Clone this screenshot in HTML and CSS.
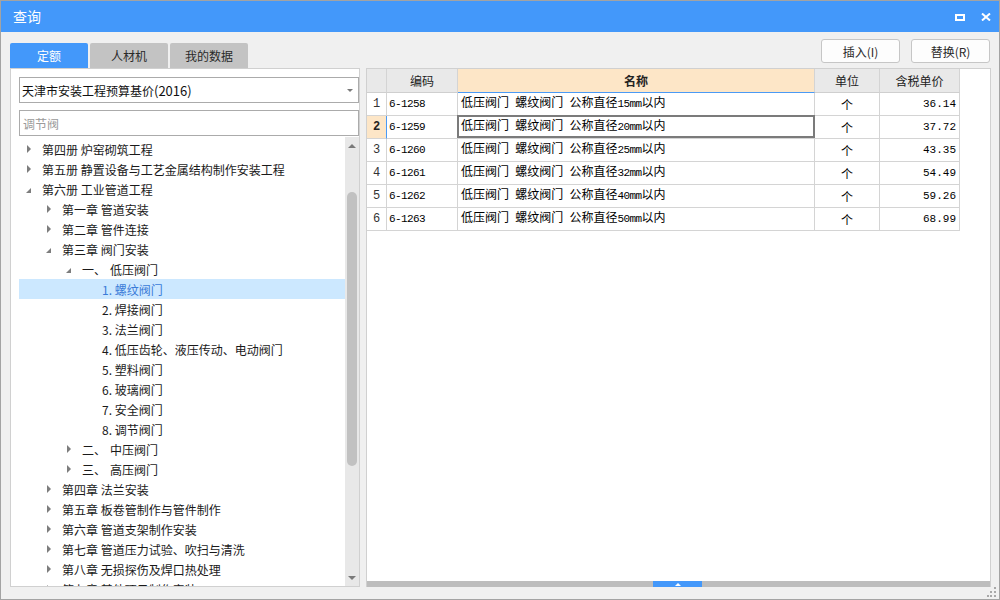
FILE: index.html
```html
<!DOCTYPE html>
<html lang="zh-CN">
<head>
<meta charset="utf-8">
<title>查询</title>
<link rel="stylesheet" href="styles.css">
</head>
<body>
<div class="window">
  <div class="titlebar">
    <span class="title">查询</span>
    <div class="winctrls">
      <span class="maxbtn"></span>
      <svg class="closebtn" width="10" height="8" viewBox="0 0 10 8"><path d="M1 0.5 L9 7.5 M9 0.5 L1 7.5" stroke="#fff" stroke-width="2" fill="none"/></svg>
    </div>
  </div>
  <div class="content">
    <div class="toprow">
      <div class="tabs">
        <div class="tab active">定额</div>
        <div class="tab">人材机</div>
        <div class="tab">我的数据</div>
      </div>
      <div class="actions">
        <button class="btn">插入(I)</button>
        <button class="btn">替换(R)</button>
      </div>
    </div>
    <div class="main">
      <div class="left">
        <div class="select"><span>天津市安装工程预算基价<span class="lat">(2016)</span></span><span class="caret"></span></div>
        <div class="search">调节阀</div>
        <div class="tree">
          <div class="tree-list">
            <div class="row lv0"><span class="tg"><i class="tri-r"></i></span>第四册 炉窑砌筑工程</div>
            <div class="row lv0"><span class="tg"><i class="tri-r"></i></span>第五册 静置设备与工艺金属结构制作安装工程</div>
            <div class="row lv0"><span class="tg"><i class="tri-d"></i></span>第六册 工业管道工程</div>
            <div class="row lv1"><span class="tg"><i class="tri-r"></i></span>第一章 管道安装</div>
            <div class="row lv1"><span class="tg"><i class="tri-r"></i></span>第二章 管件连接</div>
            <div class="row lv1"><span class="tg"><i class="tri-d"></i></span>第三章 阀门安装</div>
            <div class="row lv2"><span class="tg"><i class="tri-d"></i></span>一、<span class="gap"></span>低压阀门</div>
            <div class="row lv3 sel"><span class="tg"></span>1. 螺纹阀门</div>
            <div class="row lv3"><span class="tg"></span>2. 焊接阀门</div>
            <div class="row lv3"><span class="tg"></span>3. 法兰阀门</div>
            <div class="row lv3"><span class="tg"></span>4. 低压齿轮、液压传动、电动阀门</div>
            <div class="row lv3"><span class="tg"></span>5. 塑料阀门</div>
            <div class="row lv3"><span class="tg"></span>6. 玻璃阀门</div>
            <div class="row lv3"><span class="tg"></span>7. 安全阀门</div>
            <div class="row lv3"><span class="tg"></span>8. 调节阀门</div>
            <div class="row lv2"><span class="tg"><i class="tri-r"></i></span>二、<span class="gap"></span>中压阀门</div>
            <div class="row lv2"><span class="tg"><i class="tri-r"></i></span>三、<span class="gap"></span>高压阀门</div>
            <div class="row lv1"><span class="tg"><i class="tri-r"></i></span>第四章 法兰安装</div>
            <div class="row lv1"><span class="tg"><i class="tri-r"></i></span>第五章 板卷管制作与管件制作</div>
            <div class="row lv1"><span class="tg"><i class="tri-r"></i></span>第六章 管道支架制作安装</div>
            <div class="row lv1"><span class="tg"><i class="tri-r"></i></span>第七章 管道压力试验、吹扫与清洗</div>
            <div class="row lv1"><span class="tg"><i class="tri-r"></i></span>第八章 无损探伤及焊口热处理</div>
            <div class="row lv1"><span class="tg"><i class="tri-r"></i></span>第九章 其他项目制作安装</div>
          </div>
          <div class="vscroll">
            <div class="sbtn"><i class="tri-up"></i></div>
            <div class="vtrack"><div class="vthumb"></div></div>
            <div class="sbtn"><i class="tri-dn"></i></div>
          </div>
        </div>
      </div>
      <div class="right">
        <div class="grid">
          <div class="c hd"></div>
          <div class="c hd">编码</div>
          <div class="c hd hd-sel">名称</div>
          <div class="c hd">单位</div>
          <div class="c hd">含税单价</div>

          <div class="c rn">1</div>
          <div class="c code">6-1258</div>
          <div class="c name"><span class="nt">低压阀门 螺纹阀门 公称直径<span class="mono">15mm</span>以内</span></div>
          <div class="c unit">个</div>
          <div class="c price">36.14</div>

          <div class="c rn rn-sel">2</div>
          <div class="c code">6-1259</div>
          <div class="c name focus"><span class="nt">低压阀门 螺纹阀门 公称直径<span class="mono">20mm</span>以内</span></div>
          <div class="c unit">个</div>
          <div class="c price">37.72</div>

          <div class="c rn">3</div>
          <div class="c code">6-1260</div>
          <div class="c name"><span class="nt">低压阀门 螺纹阀门 公称直径<span class="mono">25mm</span>以内</span></div>
          <div class="c unit">个</div>
          <div class="c price">43.35</div>

          <div class="c rn">4</div>
          <div class="c code">6-1261</div>
          <div class="c name"><span class="nt">低压阀门 螺纹阀门 公称直径<span class="mono">32mm</span>以内</span></div>
          <div class="c unit">个</div>
          <div class="c price">54.49</div>

          <div class="c rn">5</div>
          <div class="c code">6-1262</div>
          <div class="c name"><span class="nt">低压阀门 螺纹阀门 公称直径<span class="mono">40mm</span>以内</span></div>
          <div class="c unit">个</div>
          <div class="c price">59.26</div>

          <div class="c rn">6</div>
          <div class="c code">6-1263</div>
          <div class="c name"><span class="nt">低压阀门 螺纹阀门 公称直径<span class="mono">50mm</span>以内</span></div>
          <div class="c unit">个</div>
          <div class="c price">68.99</div>
        </div>
        <div class="fill"></div>
        <div class="hsplit"><div class="hthumb"><i class="tri-w"></i></div></div>
      </div>
    </div>
  </div>
  <svg class="grip" width="10" height="10" viewBox="0 0 10 10">
    <rect x="7" y="0" width="2" height="2" fill="#a8a8a8"/>
    <rect x="3" y="4" width="2" height="2" fill="#a8a8a8"/>
    <rect x="7" y="4" width="2" height="2" fill="#a8a8a8"/>
    <rect x="0" y="8" width="2" height="2" fill="#a8a8a8"/>
    <rect x="3" y="8" width="2" height="2" fill="#a8a8a8"/>
    <rect x="7" y="8" width="2" height="2" fill="#a8a8a8"/>
  </svg>
</div>
</body>
</html>
```

FILE: styles.css
```css
html, body {
  margin: 0;
  padding: 0;
}
body {
  font-family: "Noto Sans CJK SC", "Noto Sans", sans-serif;
  font-size: 12px;
  color: #1e1e1e;
}
.window {
  width: 1000px;
  height: 600px;
  box-sizing: border-box;
  border: 1px solid #a3a3a3;
  background: #f0f0f0;
  display: flex;
  flex-direction: column;
  position: relative;
  overflow: hidden;
}
.titlebar {
  height: 31px;
  flex: none;
  background: #4398fa;
  color: #fff;
  display: flex;
  align-items: center;
  padding-left: 12px;
  font-size: 14px;
}
.title {
  flex: 1;
  line-height: 31px;
}
.winctrls {
  display: flex;
  align-items: center;
  gap: 16px;
  padding-right: 8px;
  padding-top: 1px;
}
.maxbtn {
  width: 10px;
  height: 7px;
  box-sizing: border-box;
  border: 2px solid #fff;
}
.closebtn {
  display: block;
}
.content {
  flex: 1;
  display: flex;
  flex-direction: column;
  padding: 7px 8px 12px 9px;
  min-height: 0;
}
.toprow {
  height: 29px;
  flex: none;
  display: flex;
  justify-content: space-between;
}
.tabs {
  display: flex;
  gap: 2px;
  align-self: flex-end;
}
.tab {
  width: 78px;
  height: 25px;
  line-height: 25px;
  text-align: center;
  background: #c3c3c3;
  color: #2a2a2a;
  border-radius: 2px 2px 0 0;
}
.tab.active {
  background: #4398fa;
  color: #fff;
}
.actions {
  display: flex;
  gap: 11px;
  align-self: flex-start;
  padding-right: 1px;
}
.btn {
  width: 79px;
  height: 24px;
  box-sizing: border-box;
  border: 1px solid #c6c6c6;
  border-radius: 3px;
  background: #fdfdfd;
  font-family: "Noto Sans CJK SC", "Noto Sans", sans-serif;
  font-size: 12px;
  color: #2a2a2a;
  padding: 0;
}
.main {
  flex: 1;
  display: flex;
  gap: 6px;
  min-height: 0;
}
.left {
  width: 350px;
  flex: none;
  box-sizing: border-box;
  border: 1px solid #d0d0d0;
  background: #fff;
  display: flex;
  flex-direction: column;
  padding: 8px 0 0 8px;
}
.select {
  height: 26px;
  flex: none;
  box-sizing: border-box;
  border: 1px solid #ababab;
  display: flex;
  align-items: center;
  padding-left: 2px;
  font-size: 12px;
  color: #111;
}
.lat {
  font-size: 13px;
}
.caret {
  margin-left: auto;
  margin-right: 5px;
  width: 0;
  height: 0;
  border-top: 3px solid #7a7a7a;
  border-left: 3px solid transparent;
  border-right: 3px solid transparent;
}
.search {
  margin-top: 7px;
  height: 26px;
  flex: none;
  box-sizing: border-box;
  border: 1px solid #ababab;
  display: flex;
  align-items: center;
  padding-left: 3px;
  color: #9a9a9a;
}
.tree {
  margin-top: 1px;
  flex: 1;
  display: flex;
  min-height: 0;
}
.tree-list {
  flex: 1;
  overflow: hidden;
  padding-top: 2px;
}
.row {
  height: 20px;
  display: flex;
  align-items: center;
  white-space: nowrap;
  color: #1a1a1a;
}
.row.lv1 { padding-left: 20px; }
.row.lv2 { padding-left: 40px; }
.row.lv3 { padding-left: 60px; }
.row.sel {
  background: #cce8ff;
  color: #3a7bd8;
}
.tg {
  width: 23px;
  flex: none;
  display: flex;
  align-items: center;
}
.gap {
  display: inline-block;
  width: 4px;
}
.tri-r {
  margin-left: 8px;
  width: 0;
  height: 0;
  border-left: 4px solid #7d7d7d;
  border-top: 4px solid transparent;
  border-bottom: 4px solid transparent;
}
.tri-d {
  margin-left: 7px;
  margin-top: 2px;
  width: 0;
  height: 0;
  border-bottom: 5px solid #7d7d7d;
  border-left: 5px solid transparent;
}
.vscroll {
  width: 14px;
  flex: none;
  background: #e8e8e8;
  display: flex;
  flex-direction: column;
}
.sbtn {
  height: 17px;
  flex: none;
  display: flex;
  align-items: center;
  justify-content: center;
}
.tri-up {
  width: 0;
  height: 0;
  border-bottom: 4px solid #7a7a7a;
  border-left: 4px solid transparent;
  border-right: 4px solid transparent;
}
.tri-dn {
  width: 0;
  height: 0;
  border-top: 4px solid #7a7a7a;
  border-left: 4px solid transparent;
  border-right: 4px solid transparent;
}
.vtrack {
  flex: 1;
}
.vthumb {
  margin-top: 38px;
  margin-left: 2px;
  width: 10px;
  height: 274px;
  border-radius: 5px;
  background: #c1c1c1;
}
.right {
  flex: 1;
  box-sizing: border-box;
  border: 1px solid #d0d0d0;
  border-bottom: none;
  background: #fff;
  display: flex;
  flex-direction: column;
  min-width: 0;
}
.grid {
  display: grid;
  grid-template-columns: 20px 71px 357px 65px 80px;
  grid-template-rows: 24px repeat(6, 23px);
  flex: none;
}
.c {
  box-sizing: border-box;
  border-right: 1px solid #d4d4d4;
  border-bottom: 1px solid #d4d4d4;
  display: flex;
  align-items: center;
  white-space: nowrap;
  overflow: hidden;
  color: #000;
}
.hd {
  background: #e9e9e9;
  justify-content: center;
  color: #222;
  border-bottom-color: #cfcfcf;
}
.hd-sel {
  background: #fde6c7;
  font-weight: bold;
  border-bottom: 1px solid #4a9af5;
}
.rn {
  justify-content: center;
  font-family: "Liberation Mono", monospace;
  font-size: 12px;
  color: #333;
}
.rn-sel {
  background: #fde6c7;
  font-weight: bold;
  color: #222;
  border-right-color: #4a9af5;
}
.code {
  padding-left: 2px;
  font-family: "Liberation Mono", monospace;
  font-size: 11px;
  letter-spacing: -0.6px;
}
.name {
  padding-left: 3px;
  position: relative;
  overflow: visible;
}
.nt {
  font-family: "Liberation Mono", "Noto Sans CJK SC", monospace;
  font-size: 12px;
  line-height: 16px;
  word-spacing: -1px;
}
.mono {
  font-size: 11px;
  letter-spacing: -0.6px;
}
.focus::after {
  content: "";
  position: absolute;
  left: -1px;
  top: -1px;
  right: -1px;
  bottom: 0;
  border: 2px solid #7b7b7b;
}
.unit {
  justify-content: center;
}
.price {
  justify-content: flex-end;
  padding-right: 3px;
  font-family: "Liberation Mono", monospace;
  font-size: 11px;
}
.fill {
  flex: 1;
}
.hsplit {
  height: 6px;
  flex: none;
  background: #bdbdbd;
  display: flex;
}
.hthumb {
  margin-left: 286px;
  width: 49px;
  background: #4398fa;
  display: flex;
  align-items: center;
  justify-content: center;
}
.tri-w {
  width: 0;
  height: 0;
  border-bottom: 3px solid #fff;
  border-left: 3px solid transparent;
  border-right: 3px solid transparent;
}
.grip {
  position: absolute;
  right: 2px;
  bottom: 2px;
}
```
